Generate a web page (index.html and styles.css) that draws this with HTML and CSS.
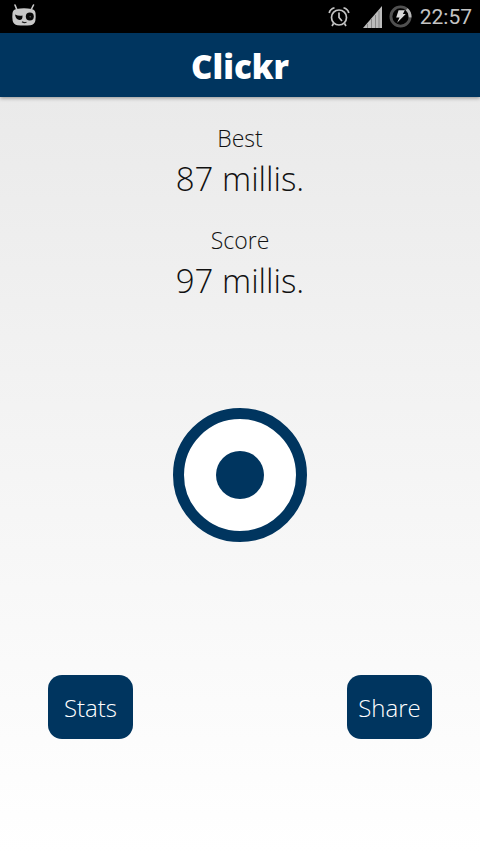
FILE: index.html
```html
<!DOCTYPE html>
<html lang="en">
<head>
<meta charset="utf-8">
<meta name="viewport" content="width=device-width, initial-scale=1">
<title>Clickr</title>
<link rel="stylesheet" href="styles.css">
</head>
<body>
<div class="status-bar">
  <svg class="status-robot" width="24" height="22" viewBox="0 0 24 22" aria-hidden="true">
    <path d="M3 1L5 6M21.500 1L19 6" stroke="#c8c8c8" stroke-width="1.600" stroke-linecap="round"/>
    <path d="M4.500 5Q12 3.500 19.500 5Q23 5.500 23.500 9Q24 13 23.300 17Q22.500 20.500 18.500 21.200Q12 22 5.500 21.200Q1.500 20.500 .7 17Q0 13 .5 9Q1 5.500 4.500 5Z" fill="#c8c8c8"/>
    <path d="M3 10.500Q7 12.500 10.500 11.500Q10.800 16 7.500 16Q3.800 15.500 3 10.500Z" fill="#080808"/>
    <circle cx="17.800" cy="12.500" r="4" fill="#080808"/>
    <circle cx="18.200" cy="12.800" r=".8" fill="#555"/>
    <path d="M10 17.800Q12 19.200 14.500 18.300" fill="none" stroke="#222" stroke-width="1.200"/>
  </svg>
  <div class="status-icons">
    <svg width="22" height="22" viewBox="0 0 22 22" fill="none" stroke="#c4c4c4" aria-hidden="true">
      <circle cx="11" cy="11.500" r="7.500" stroke-width="1.700"/>
      <path d="M11 6.500V11.500L14 15M5.500 17.500L4 20M16.500 17.500L18 20" stroke-width="1.700"/>
      <path d="M1.200 7Q2 3 6.500 1.800M20.800 7Q20 3 15.500 1.800" stroke-width="1.700"/>
    </svg>
    <svg class="status-signal" width="19" height="22" viewBox="0 0 19 22" aria-hidden="true">
      <path d="M0 22L19 0V22Z" fill="#bcbcbc"/>
      <path d="M4.500 18V22M8.500 13V22M12.500 9V22M16 5V22" stroke="#888" stroke-width="1"/>
    </svg>
    <svg class="status-battery" width="23" height="23" viewBox="0 0 24 24" fill="none" aria-hidden="true">
      <circle cx="12" cy="12" r="10" stroke="#505050" stroke-width="3"/>
      <path d="M18.500 4.400A10 10 0 0 1 21.900 13" stroke="#b8b8b8" stroke-width="3"/>
      <path d="M10 5.500H16.500L14.500 9.500H17.500L8.500 18.500L11 13H7.500Z" fill="#d8d8d8"/>
    </svg>
    <time class="status-clock">22:57</time>
  </div>
</div>
<header class="app-header"><h1 class="app-title">Clickr</h1></header>
<main class="game">
  <dl class="scores">
    <div class="score">
      <dt class="score-label">Best</dt>
      <dd class="score-value">87 millis.</dd>
    </div>
    <div class="score">
      <dt class="score-label">Score</dt>
      <dd class="score-value">97 millis.</dd>
    </div>
  </dl>
  <button class="target" type="button" aria-label="Click target"><span class="target-dot"></span></button>
  <div class="actions">
    <button class="action" type="button">Stats</button>
    <button class="action" type="button">Share</button>
  </div>
</main>
</body>
</html>
```
FILE: styles.css
```css
* {
  box-sizing: border-box;
}

body {
  --navy: #00355f;
  display: flex;
  flex-direction: column;
  min-height: 100vh;
  margin: 0;
  font-family: "Open Sans", "Noto Sans", sans-serif;
  font-weight: 300;
  color: #111;
  background: #fff;
}

.status-bar {
  display: flex;
  align-items: center;
  justify-content: space-between;
  height: 33px;
  padding: 0 8px 0 12px;
  background: #000;
}

.status-robot {
  margin-bottom: 3px;
}

.status-icons {
  display: flex;
  align-items: center;
}

.status-signal {
  margin-left: 13px;
}

.status-battery {
  margin-left: 7px;
}

.status-clock {
  padding-top: 2px;
  margin-left: 8px;
  font: 400 21px/31px Roboto, sans-serif;
  color: #c4c4c4;
}

.app-header {
  z-index: 1;
  background: var(--navy);
  box-shadow: 0 1px 4px rgba(0, 0, 0, 0.4);
}

.app-title {
  margin: 0;
  padding-top: 3px;
  font-size: 33px;
  font-weight: 800;
  line-height: 61px;
  text-align: center;
  color: #fff;
}

.game {
  display: grid;
  flex: 1;
  grid-template-rows: 1fr auto 1fr;
  background: linear-gradient(#eaeaea, #f5f5f5 50%, #fff);
}

.scores {
  display: flex;
  flex-direction: column;
  gap: 20px;
  margin: 0;
  padding-top: 24px;
  text-align: center;
}

.score-label {
  font-size: 23px;
  line-height: 34px;
}

.score-value {
  margin: 0;
  font-size: 33px;
  line-height: 48px;
}

.target {
  display: grid;
  place-items: center;
  justify-self: center;
  width: 134px;
  height: 134px;
  padding: 0;
  border: 11px solid var(--navy);
  border-radius: 50%;
  background: #fff;
}

.target-dot {
  width: 48px;
  height: 48px;
  border-radius: 50%;
  background: var(--navy);
}

.actions {
  display: flex;
  align-items: flex-end;
  justify-content: space-between;
  padding: 0 48px 114px;
}

.action {
  width: 85px;
  height: 64px;
  padding: 0;
  border: 0;
  border-radius: 14px;
  font: inherit;
  font-size: 24px;
  color: #fff;
  background: var(--navy);
}
```
